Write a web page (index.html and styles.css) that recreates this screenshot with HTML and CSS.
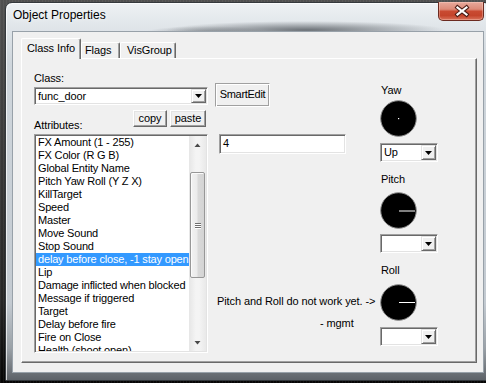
FILE: index.html
```html
<!DOCTYPE html>
<html>
<head>
<meta charset="utf-8">
<title>Object Properties</title>
<link rel="stylesheet" href="styles.css">
</head>
<body>
<div class="window">
  <div class="titlebar">
    <span class="title">Object Properties</span>
    <div class="close">
      <svg width="46" height="18" viewBox="0 0 46 18">
        <path d="M18.5 5.5 L27.5 12.5 M27.5 5.5 L18.5 12.5" stroke="#4a1d16" stroke-width="4.2" stroke-linecap="square" fill="none"/>
        <path d="M18.5 5.5 L27.5 12.5 M27.5 5.5 L18.5 12.5" stroke="#ffffff" stroke-width="2.2" stroke-linecap="square" fill="none"/>
      </svg>
    </div>
  </div>
  <div class="client">
    <div class="tabs">
      <div class="tab active">Class Info</div>
      <div class="tab flags">Flags</div>
      <div class="tab vis">VisGroup</div>
    </div>
    <div class="panel">
      <div class="col-left">
        <div class="label">Class:</div>
        <div class="combo combo-class">
          <span class="combo-val">func_door</span>
          <span class="combo-btn"><svg width="7" height="4" viewBox="0 0 7 4"><polygon points="0,0 7,0 3.5,4" fill="#000"/></svg></span>
        </div>
        <div class="attr-row">
          <div class="label">Attributes:</div>
          <div class="btns">
            <div class="btn btn-copy">copy</div>
            <div class="btn btn-paste">paste</div>
          </div>
        </div>
        <div class="listbox">
          <ul class="items">
            <li>FX Amount (1 - 255)</li>
            <li>FX Color (R G B)</li>
            <li>Global Entity Name</li>
            <li>Pitch Yaw Roll (Y Z X)</li>
            <li>KillTarget</li>
            <li>Speed</li>
            <li>Master</li>
            <li>Move Sound</li>
            <li>Stop Sound</li>
            <li class="sel">delay before close, -1 stay open</li>
            <li>Lip</li>
            <li>Damage inflicted when blocked</li>
            <li>Message if triggered</li>
            <li>Target</li>
            <li>Delay before fire</li>
            <li>Fire on Close</li>
            <li>Health (shoot open)</li>
          </ul>
          <div class="vscroll">
            <div class="sb-arrow"><svg width="7" height="4" viewBox="0 0 7 4"><polygon points="0.5,4 6.5,4 3.5,0.5" fill="#4a4a4a"/></svg></div>
            <div class="sb-track">
              <div class="sb-thumb">
                <div class="grip"></div>
                <div class="grip"></div>
                <div class="grip"></div>
              </div>
            </div>
            <div class="sb-arrow"><svg width="7" height="4" viewBox="0 0 7 4"><polygon points="0.5,0 6.5,0 3.5,3.5" fill="#4a4a4a"/></svg></div>
          </div>
        </div>
      </div>
      <div class="col-mid">
        <div class="etched-btn">SmartEdit</div>
        <div class="edit">4</div>
        <div class="note">Pitch and Roll do not work yet. -&gt;</div>
        <div class="note mgmt">- mgmt</div>
      </div>
      <div class="col-right">
        <div class="label dial-label">Yaw</div>
        <svg class="dial dial-yaw" width="37" height="37" viewBox="0 0 37 37">
          <circle cx="18.5" cy="18.5" r="17.8" fill="#000" stroke="#8c8c8c" stroke-width="1"/>
          <rect x="18" y="18" width="1.2" height="1.2" fill="#fff"/>
        </svg>
        <div class="combo combo-small combo-yaw">
          <span class="combo-val">Up</span>
          <span class="combo-btn"><svg width="7" height="4" viewBox="0 0 7 4"><polygon points="0,0 7,0 3.5,4" fill="#000"/></svg></span>
        </div>
        <div class="label dial-label pitch-label">Pitch</div>
        <svg class="dial dial-pitch" width="37" height="37" viewBox="0 0 37 37">
          <circle cx="18.5" cy="18.5" r="17.8" fill="#000" stroke="#8c8c8c" stroke-width="1"/>
          <line x1="19" y1="19" x2="35" y2="19" stroke="#fff" stroke-width="1"/>
        </svg>
        <div class="combo combo-small combo-pitch">
          <span class="combo-val"></span>
          <span class="combo-btn"><svg width="7" height="4" viewBox="0 0 7 4"><polygon points="0,0 7,0 3.5,4" fill="#000"/></svg></span>
        </div>
        <div class="label dial-label roll-label">Roll</div>
        <svg class="dial dial-roll" width="37" height="37" viewBox="0 0 37 37">
          <circle cx="18.5" cy="18.5" r="17.8" fill="#000" stroke="#8c8c8c" stroke-width="1"/>
          <line x1="19" y1="18.5" x2="35" y2="18.5" stroke="#fff" stroke-width="1"/>
        </svg>
        <div class="combo combo-small combo-roll">
          <span class="combo-val"></span>
          <span class="combo-btn"><svg width="7" height="4" viewBox="0 0 7 4"><polygon points="0,0 7,0 3.5,4" fill="#000"/></svg></span>
        </div>
      </div>
    </div>
  </div>
</div>
</body>
</html>
```

FILE: styles.css
```css
* { box-sizing: border-box; }

html, body {
  margin: 0;
  padding: 0;
}

body {
  width: 486px;
  height: 383px;
  overflow: hidden;
  font-family: "Liberation Sans", Arial, sans-serif;
  font-size: 11px;
  letter-spacing: -0.1px;
  color: #000;
  background:
    repeating-linear-gradient(to right, rgba(255,255,255,0.05) 0 1px, transparent 1px 3px),
    linear-gradient(to bottom, #505050 0, #3e3e3e 120px, #262626 300px, #0a0a0a 370px, #050505 100%);
}

/* ---------- window frame (glass) ---------- */
.window {
  margin: 2px 0 0 5px;
  width: 486px;
  height: 379px;
  border: 1px solid #34393d;
  border-radius: 7px 7px 0 0;
  padding: 0 6px 6px 6px;
  display: flex;
  flex-direction: column;
  background:
    radial-gradient(ellipse 140px 9px at 300px 27px, rgba(70,76,82,0.75), rgba(70,76,82,0) 100%),
    radial-gradient(ellipse 60px 6px at 200px 29px, rgba(90,96,102,0.5), rgba(90,96,102,0) 100%),
    linear-gradient(to bottom, #eef1f4 0, #e2e7eb 20px, #cfd6dc 60px, #c3cad1 300px, #9aa1a7 345px, #5d6268 100%);
  box-shadow: inset 1px 1px 0 rgba(255,255,255,0.7), inset -1px 0 0 rgba(255,255,255,0.4);
}

.titlebar {
  height: 28px;
  display: flex;
  justify-content: space-between;
  align-items: flex-start;
  flex: none;
}

.title {
  font-family: "Liberation Sans", Arial, sans-serif;
  font-size: 12px;
  letter-spacing: 0;
  line-height: 15px;
  padding: 5px 0 0 1px;
  color: #000;
  text-shadow: 0 0 6px rgba(255,255,255,0.9);
}

.close {
  width: 46px;
  height: 19px;
  margin-top: -1px;
  border: 1px solid #6b2a20;
  border-top: none;
  border-radius: 0 0 5px 5px;
  background: linear-gradient(to bottom, #e8aa9c 0%, #dd8a78 40%, #c94a31 52%, #c4442b 75%, #d9725a 100%);
  box-shadow: inset 0 0 0 1px rgba(255,220,210,0.35);
}

.close svg { display: block; }

/* ---------- client ---------- */
.client {
  width: 472px;
  height: 342px;
  flex: none;
  background: #f0f0f0;
  border: 1px solid #98a1a9;
  padding: 6px 0 0 8px;
}

.tabs {
  display: flex;
  align-items: flex-end;
  height: 20px;
}

.tab {
  height: 16px;
  line-height: 13px;
  padding-top: 1px;
  border-top: 1px solid #fff;
  border-left: 1px solid #fff;
  border-right: 1px solid #696969;
  border-radius: 2px 2px 0 0;
  box-shadow: inset -1px 0 0 #a0a0a0;
  background: #f0f0f0;
  white-space: nowrap;
}

.tab.active {
  width: 60px;
  height: 21px;
  margin-bottom: -1px;
  padding: 3px 0 0 5px;
  position: relative;
  z-index: 1;
}

.tab.flags {
  width: 39px;
  padding-left: 3px;
}

.tab.vis {
  width: 56px;
  padding-left: 6px;
}

.panel {
  width: 456px;
  height: 305px;
  border-top: 1px solid #fff;
  border-left: 1px solid #fff;
  border-right: 1px solid #696969;
  border-bottom: 1px solid #696969;
  box-shadow: inset -1px -1px 0 #a0a0a0;
  background: #f0f0f0;
  display: flex;
  align-items: flex-start;
}

.label {
  line-height: 13px;
  white-space: nowrap;
}

/* ---------- left column ---------- */
.col-left {
  width: 174px;
  margin-left: 12px;
  display: flex;
  flex-direction: column;
}

.col-left > .label { margin-top: 13px; }

.combo {
  display: flex;
  align-items: stretch;
  background: #fff;
  border-style: solid;
  border-width: 1px;
  border-color: #a0a0a0 #fff #fff #a0a0a0;
  box-shadow: inset 1px 1px 0 #696969, inset -1px -1px 0 #e3e3e3;
  padding: 1px 1px 1px 1px;
}

.combo-class {
  height: 18px;
  margin-top: 2px;
}

.combo-val {
  flex: 1;
  line-height: 14px;
  padding-left: 2px;
  white-space: nowrap;
}

.combo-btn {
  width: 15px;
  flex: none;
  display: flex;
  align-items: center;
  justify-content: center;
  background: #f0f0f0;
  border-style: solid;
  border-width: 1px;
  border-color: #e3e3e3 #696969 #696969 #e3e3e3;
  box-shadow: inset 1px 1px 0 #fff, inset -1px -1px 0 #a0a0a0;
}

.combo-btn svg { display: block; }

.attr-row {
  margin-top: 5px;
  height: 22px;
  display: flex;
  justify-content: space-between;
  align-items: flex-start;
}

.attr-row .label {
  align-self: flex-end;
}

.btns {
  display: flex;
  gap: 3px;
  margin-right: 2px;
}

.btn {
  height: 17px;
  line-height: 14px;
  text-align: center;
  background: #f0f0f0;
  border-style: solid;
  border-width: 1px;
  border-color: #fff #696969 #696969 #fff;
  box-shadow: inset -1px -1px 0 #a0a0a0, inset 1px 1px 0 #e3e3e3;
}

.btn-copy { width: 34px; }
.btn-paste { width: 36px; }

.listbox {
  margin-top: 2px;
  height: 219px;
  display: flex;
  background: #fff;
  border-style: solid;
  border-width: 1px;
  border-color: #a0a0a0 #fff #fff #a0a0a0;
  box-shadow: inset 1px 1px 0 #696969, inset -1px -1px 0 #e3e3e3;
  padding: 1px 1px 1px 1px;
}

.items {
  list-style: none;
  margin: 0;
  padding: 0;
  flex: 1;
  overflow: hidden;
}

.items li {
  height: 13px;
  line-height: 13px;
  padding-left: 2px;
  letter-spacing: -0.17px;
  white-space: nowrap;
}

.items li.sel {
  background: #3399ff;
  color: #fff;
}

.vscroll {
  width: 17px;
  flex: none;
  display: flex;
  flex-direction: column;
  background: linear-gradient(to right, #e6e6e6, #f4f4f4 40%, #f4f4f4 60%, #e9e9e9);
}

.sb-arrow {
  height: 17px;
  display: flex;
  align-items: center;
  justify-content: center;
  flex: none;
}

.sb-arrow svg { display: block; }

.sb-track {
  flex: 1;
  padding: 19px 1px 0 1px;
}

.sb-thumb {
  height: 106px;
  border: 1px solid #979797;
  border-radius: 2px;
  background: linear-gradient(to right, #f2f2f2 0, #ebebeb 45%, #d9d9d9 55%, #d4d4d4 100%);
  box-shadow: inset 1px 1px 0 #fbfbfb;
  display: flex;
  flex-direction: column;
  justify-content: center;
  align-items: center;
  gap: 1px;
}

.grip {
  width: 6px;
  height: 1px;
  background: #6f6f6f;
  box-shadow: 0 1px 0 #fff;
}

/* ---------- middle column ---------- */
.col-mid {
  width: 165px;
  margin-left: 7px;
  display: flex;
  flex-direction: column;
  align-items: flex-start;
}

.etched-btn {
  margin-top: 24px;
  width: 55px;
  height: 24px;
  line-height: 20px;
  text-align: center;
  border-style: solid;
  border-width: 1px;
  border-color: #a0a0a0 #fff #fff #a0a0a0;
  box-shadow: inset 1px 1px 0 #fff, inset -1px -1px 0 #a0a0a0;
  background: #f0f0f0;
  letter-spacing: -0.3px;
  white-space: nowrap;
}

.edit {
  margin-top: 27px;
  margin-left: 4px;
  width: 127px;
  height: 20px;
  line-height: 16px;
  padding-left: 3px;
  background: #fff;
  border-style: solid;
  border-width: 1px;
  border-color: #a0a0a0 #fff #fff #a0a0a0;
  box-shadow: inset 1px 1px 0 #696969, inset -1px -1px 0 #e3e3e3;
}

.note {
  margin-top: 141px;
  margin-left: 2px;
  line-height: 13px;
  white-space: nowrap;
}

.note.mgmt {
  margin-top: 9px;
  margin-left: 105px;
}

/* ---------- right column ---------- */
.col-right {
  width: 58px;
  display: flex;
  flex-direction: column;
}

.dial-label {
  margin-top: 25px;
  padding-left: 1px;
}

.pitch-label,
.roll-label {
  margin-top: 11px;
}

.dial {
  display: block;
  margin-top: 3px;
}

.dial-pitch { margin-top: 6px; }
.dial-roll { margin-top: 7px; }

.combo-small {
  height: 19px;
}

.combo-small .combo-val { line-height: 15px; }

.combo-yaw { margin-top: 6px; }
.combo-pitch { margin-top: 5px; }
.combo-roll { margin-top: 6px; }
```
